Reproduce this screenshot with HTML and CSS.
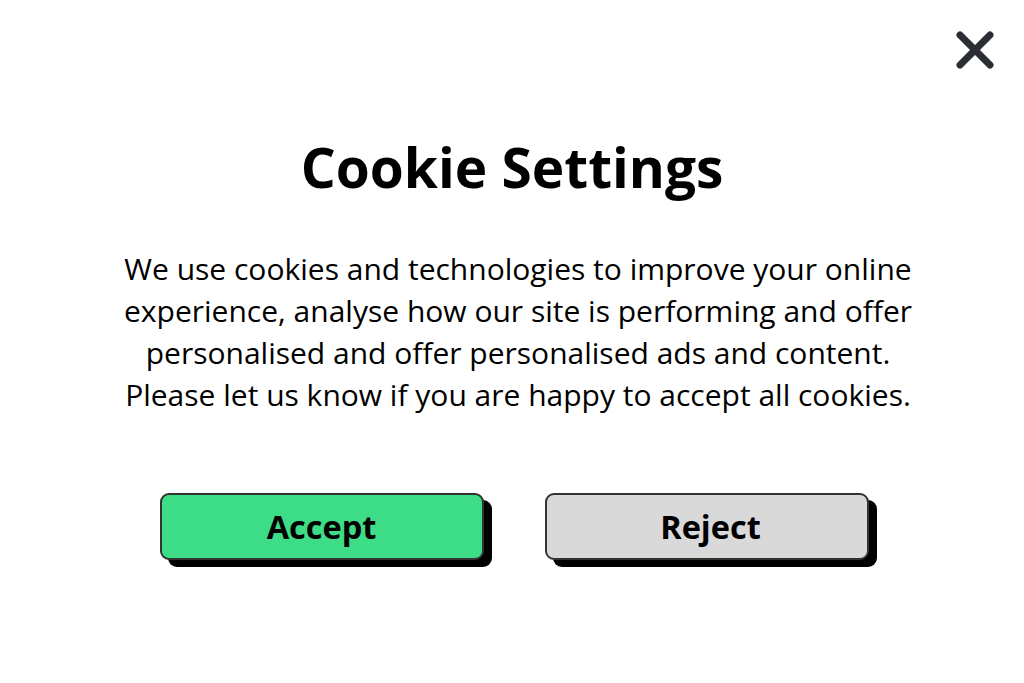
FILE: index.html
```html
<!DOCTYPE html>
<html lang="en">
<head>
<meta charset="utf-8">
<title>Cookie Settings</title>
<link rel="stylesheet" href="styles.css">
</head>
<body>
<div class="dialog">
  <button class="close" aria-label="Close">
    <svg width="40" height="40" viewBox="0 0 40 40"><path d="M5 5 L35 35 M35 5 L5 35" stroke="#2b2f33" stroke-width="7" stroke-linecap="round" fill="none"/></svg>
  </button>
  <h1 class="title">Cookie Settings</h1>
  <p class="text">We use cookies and technologies to improve your online experience, analyse how our site is performing and offer personalised and offer personalised ads and content. Please let us know if you are happy to accept all cookies.</p>
  <div class="actions">
    <button class="btn btn-accept">Accept</button>
    <button class="btn btn-reject">Reject</button>
  </div>
</div>
</body>
</html>
```
FILE: styles.css
```css
html, body {
  margin: 0;
  padding: 0;
  background: #ffffff;
}
body {
  font-family: "Open Sans", "Liberation Sans", sans-serif;
  color: #000;
}
.dialog {
  position: relative;
  width: 1024px;
  height: 683px;
  display: flex;
  flex-direction: column;
  align-items: center;
}
.close {
  position: absolute;
  top: 30px;
  left: 955px;
  width: 40px;
  height: 40px;
  padding: 0;
  border: none;
  background: none;
}
.close svg { display: block; }
.title {
  margin: 127px 0 0;
  font-size: 55px;
  font-weight: 700;
  line-height: 80px;
}
.text {
  margin: 41px 0 0;
  width: 800px;
  padding-left: 12px;
  text-align: center;
  font-size: 30px;
  line-height: 42px;
}
.actions {
  margin-top: 77px;
  display: flex;
  gap: 61px;
  padding-left: 4px;
}
.btn {
  width: 324px;
  height: 67px;
  border: 2px solid #333333;
  border-radius: 9px;
  box-shadow: 8px 7px 0 #000;
  font-family: "Open Sans", "Liberation Sans", sans-serif;
  font-size: 32.5px;
  font-weight: 700;
  color: #000;
  padding: 0;
}
.btn-accept { background: #3ddc86; }
.btn-reject { background: #d9d9d9; padding-left: 8px; }
```
